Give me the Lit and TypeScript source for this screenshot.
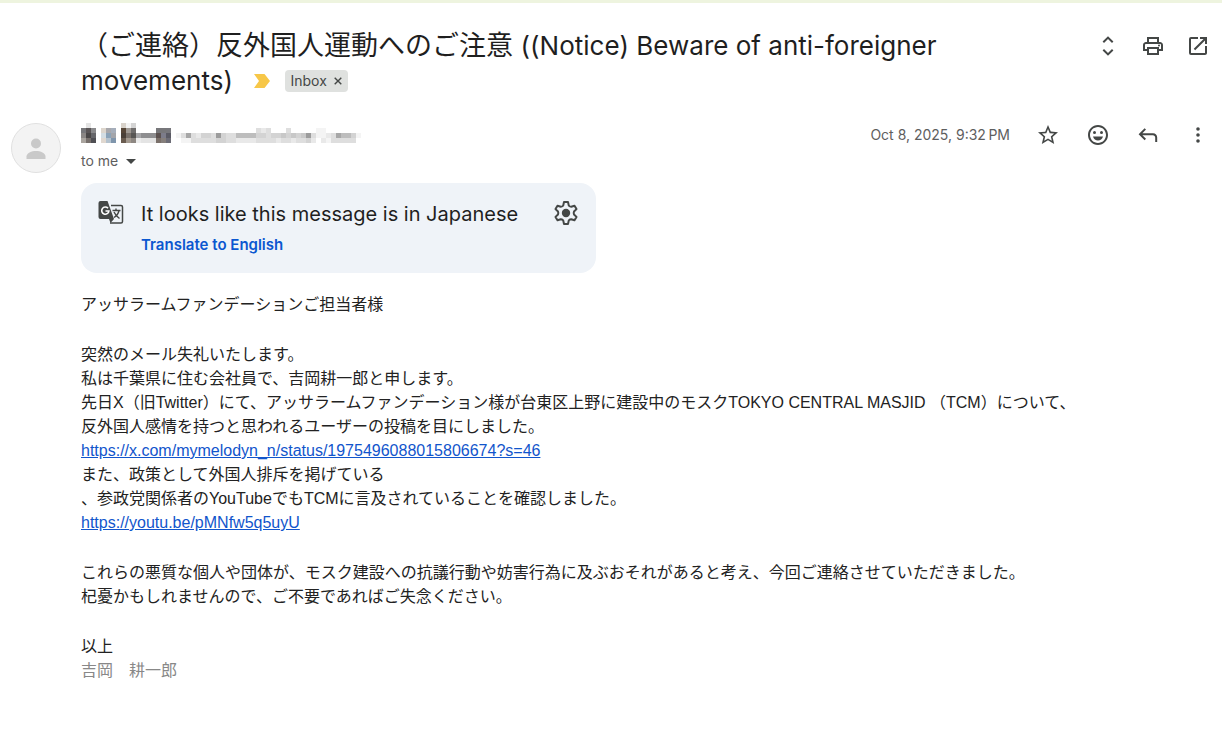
import { LitElement, html, css, svg } from "lit";
import { customElement } from "lit/decorators.js";

const CELL = 5;

type Run = [number, number, string[]];

/* Blurred-out sender name and address: rows of grey and tinted cells. */
const NAME: Run[] = [
  [1, 0, ["#e4e4e4"]],
  [0, 1, ["#77777a", "#5a5556", "#8a8a8c"]],
  [0, 2, ["#8a8684", "#4a4747", "#66666a"]],
  [0, 3, ["#aaa59f", "#77706c", "#4f4f54"]],
  [4, 1, ["#ddd6cd", "#a8a8ac", "#a5aebb"]],
  [4, 2, ["#d3dde3", "#8ba3b8", "#a3a5aa"]],
  [4, 3, ["#e0d8d0", "#b4c2ce", "#7f95ac"]],
  [8, 0, ["#d8d2ca", "#f4f4f4", "#d4d4d4"]],
  [8, 1, ["#564638", "#a09a94", "#6f6d6c"]],
  [8, 2, ["#4a4038", "#7a726c", "#585654", "#a6a6a8", "#8e8e90", "#8e8e90", "#8e8e90"]],
  [8, 3, ["#6a5c50", "#a39a90", "#8d8782", "#ececec", "#e4e4e4", "#e4e4e4", "#e4e4e4"]],
  [15, 1, ["#77777a", "#77777a", "#77777c"]],
  [15, 2, ["#5c5250", "#7c7c8a", "#5a5a64"]],
  [15, 3, ["#7a706a", "#857f7c", "#6c6c76"]],
];

/* Each digit is a shade: 0 is white, 9 the darkest grey. */
const shades = (s: string) => [...s].map((c) => {
  const v = 255 - Number(c) * 11;
  return `rgb(${v},${v},${v})`;
});

const ADDRESS: Run[] = [
  [35, 1, shades("32300030000011")],
  [19, 2, shades("1383244394336666443445454593112386641")],
  [19, 3, shades("0113333344332222333323323342021333330")],
];

const icon = (d: string) => html`<svg
  width="24" height="24" viewBox="0 0 24 24" fill="currentColor" aria-hidden="true"><path fill-rule="evenodd" d=${d}></path></svg>`;

const UNFOLD = "M12 2.2l5.4 5.3-1.4 1.4-4-4-4 4-1.4-1.4L12 2.2zM12 21.8l5.4-5.3-1.4-1.4-4 4-4-4-1.4 1.4 5.4 5.3z";
const PRINT = "M19 8h-1V3H6v5H5c-1.66 0-3 1.34-3 3v6h4v4h12v-4h4v-6c0-1.66-1.34-3-3-3zM8 5h8v3H8V5zm8 12v2H8v-4h8v2zm2-2v-2H6v2H4v-4c0-.55.45-1 1-1h14c.55 0 1 .45 1 1v4h-2zM17 11.5a1 1 0 1 0 2 0 1 1 0 1 0-2 0z";
const OPEN = "M19 19H5V5h7V3H5a2 2 0 0 0-2 2v14a2 2 0 0 0 2 2h14c1.1 0 2-.9 2-2v-7h-2v7zM14 3v2h3.59l-9.83 9.83 1.41 1.41L19 6.41V10h2V3h-7z";
const STAR = "M22 9.24l-7.19-.62L12 2 9.19 8.63 2 9.24l5.46 4.73L5.82 21 12 17.27 18.18 21l-1.63-7.03L22 9.24zM12 15.4l-3.76 2.27 1-4.28-3.32-2.88 4.38-.38L12 6.1l1.71 4.04 4.38.38-3.32 2.88 1 4.28L12 15.4z";
const SMILE = "M12 2C6.48 2 2 6.48 2 12s4.48 10 10 10 10-4.48 10-10S17.52 2 12 2zm0 18c-4.42 0-8-3.58-8-8s3.58-8 8-8 8 3.58 8 8-3.58 8-8 8zM8.5 8a1.5 1.5 0 1 0 0 3 1.5 1.5 0 0 0 0-3zM15.5 8a1.5 1.5 0 1 0 0 3 1.5 1.5 0 0 0 0-3zM7 13.5c.7 2.4 2.7 4 5 4s4.3-1.6 5-4H7z";
const REPLY = "M8.6 5.2l1.4 1.4L6.4 10.2H17c2.5 0 4.2 1.7 4.2 4.2V19h-2v-4.4c0-1.5-.9-2.4-2.4-2.4H6.4L10 15.8l-1.4 1.4L2.6 11.2l6-6z";
const MORE = "M12 4.2a1.8 1.8 0 1 0 0 3.6 1.8 1.8 0 0 0 0-3.6zM12 10.2a1.8 1.8 0 1 0 0 3.6 1.8 1.8 0 0 0 0-3.6zM12 16.2a1.8 1.8 0 1 0 0 3.6 1.8 1.8 0 0 0 0-3.6z";

@customElement("app-root")
export class AppRoot extends LitElement {
  static styles = css`
    :host {
      display: block;
      min-height: 100vh;
      box-sizing: border-box;
      border-top: 3px solid #eef4df;
      padding: 25px 12px 40px 11px;
      background: #fff;
      color: #1f1f1f;
      font-family: Inter, "Noto Sans CJK JP", sans-serif;
    }
    button {
      display: flex;
      padding: 0;
      border: 0;
      background: none;
      color: #444746;
      font: inherit;
      cursor: pointer;
    }
    svg { display: block; flex: none; }
    .subject { display: flex; justify-content: space-between; gap: 20px; padding-left: 70px; }
    .title { font-size: 27px; line-height: 35px; }
    h1 { display: inline; margin: 0; font: inherit; }
    .latin { font-size: 26px; }
    .labels { display: inline-flex; align-items: center; gap: 15px; margin-left: 14px; vertical-align: top; height: 35px; }
    .chip {
      display: flex;
      align-items: center;
      gap: 7px;
      height: 22px;
      padding: 0 6px 0 5px;
      border-radius: 4px;
      background: #dfe1df;
      color: #444746;
      font-size: 14px;
      line-height: 22px;
    }
    .tools { display: flex; gap: 21px; height: 35px; align-items: center; }
    .message { display: grid; grid-template-columns: 50px 1fr; column-gap: 20px; margin-top: 25px; }
    .head { display: flex; justify-content: space-between; align-items: flex-start; gap: 20px; min-height: 60px; }
    .to { align-items: center; gap: 8px; margin-top: 8px; font-size: 14px; line-height: 20px; color: #5e5e5e; }
    .meta { display: flex; align-items: center; gap: 26px; }
    time { font-size: 14px; line-height: 24px; color: #5e5e5e; }
    .banner {
      display: grid;
      grid-template-columns: 26px 1fr 28px;
      column-gap: 17px;
      width: 515px;
      max-width: 100%;
      box-sizing: border-box;
      padding: 16px 16px 16px 17px;
      border-radius: 16px;
      background: #eff3f8;
    }
    h2 { margin: 0; font-size: 20px; line-height: 30px; font-weight: 400; }
    .translate { display: inline-block; margin-top: 4px; color: #0b57d0; font-size: 15px; line-height: 24px; font-weight: 600; text-decoration: none; }
    .body { margin-top: 20px; font: 16px/24px "Liberation Sans", "Noto Sans CJK JP", sans-serif; color: #222; }
    .body p { margin: 0 0 26px; }
    .body a { color: #1155cc; text-decoration: underline; }
    .signature { color: #888; }
  `;

  private cells() {
    return [...NAME, ...ADDRESS].map(([x, y, colours]) =>
      colours.map((c, i) => svg`<rect x=${(x + i) * CELL} y=${y * CELL} width=${CELL} height=${CELL} fill=${c}></rect>`));
  }

  render() {
    return html`
      <header class="subject">
        <div class="title">
          <h1>（ご連絡）反外国人運動へのご注意 <span class="latin">((Notice) Beware of anti-foreigner movements)</span></h1>
          <span class="labels">
            <svg width="16" height="14" viewBox="0 0 16 14" fill="#f7c748" aria-hidden="true"><path d="M0 0h10.5L16 7l-5.5 7H0l5-7z"></path></svg>
            <span class="chip">Inbox
              <button aria-label="Remove label Inbox"><svg width="8" height="8" viewBox="0 0 8 8" fill="none" stroke="currentColor" stroke-width="1.4" aria-hidden="true"><path d="M.7.7l6.6 6.6M7.3.7L.7 7.3"></path></svg></button>
            </span>
          </span>
        </div>
        <div class="tools">
          <button aria-label="Expand all">${icon(UNFOLD)}</button>
          <button aria-label="Print all">${icon(PRINT)}</button>
          <button aria-label="In new window">${icon(OPEN)}</button>
        </div>
      </header>

      <article class="message">
        <svg width="50" height="50" viewBox="0 0 50 50" aria-hidden="true">
          <circle cx="25" cy="25" r="24.5" fill="#f3f3f3" stroke="#e0e0e0"></circle>
          <circle cx="25" cy="20.5" r="5" fill="#c9c9c9"></circle>
          <path d="M15.5 36v-2.500c0-3.500 5-5.500 9.500-5.500s9.500 2 9.500 5.500V36z" fill="#c9c9c9"></path>
        </svg>
        <div>
          <div class="head">
            <div>
              <svg width="280" height="20" viewBox="0 0 280 20" shape-rendering="crispEdges" role="img" aria-label="Hidden sender">${this.cells()}</svg>
              <button class="to">to me <svg width="10" height="5" viewBox="0 0 10 5" fill="#444746" aria-hidden="true"><path d="M0 0h10L5 5z"></path></svg></button>
            </div>
            <div class="meta">
              <time datetime="2025-10-08T21:32">Oct 8, 2025, 9:32&#8239;PM</time>
              <button aria-label="Star">${icon(STAR)}</button>
              <button aria-label="Add reaction">${icon(SMILE)}</button>
              <button aria-label="Reply">${icon(REPLY)}</button>
              <button aria-label="More">${icon(MORE)}</button>
            </div>
          </div>

          <section class="banner">
            <svg width="26" height="26" viewBox="0 0 26 26" fill="none" aria-hidden="true">
              <path d="M13 6.5h10a1.500 1.500 0 0 1 1.500 1.500v14.500A1.500 1.500 0 0 1 23 24H12" stroke="#444746" stroke-width="1.5"></path>
              <path d="M2.500 2H9.500l6.500 18H2.500A2 2 0 0 1 .5 18V4a2 2 0 0 1 2-2z" fill="#444746"></path>
              <path d="M11 20h5l-3.500 4z" fill="#444746"></path>
              <path d="M10 9.200A3.600 3.600 0 1 0 10.900 12H7.500" stroke="#fff" stroke-width="1.6"></path>
              <path d="M14.500 11.500h8M18 9.500v2M21 11.500c-.6 3-2.600 5.500-5 7M16 13c1 2.500 3 4.500 5.500 6.500" stroke="#444746" stroke-width="1.4"></path>
            </svg>
            <div>
              <h2>It looks like this message is in Japanese</h2>
              <a class="translate" href="#">Translate to English</a>
            </div>
            <button aria-label="Translation settings">
              <svg width="28" height="28" viewBox="0 0 28 28" fill="none" stroke="#444746" stroke-width="2" stroke-linejoin="round" aria-hidden="true">
                <path d="M12 3h4l.8 3.600q1.200 1.200 2.400 1.200l3.300-1.100 2 3.400-2.500 2.400q-.6 1.500 0 3l2.500 2.400-2 3.400-3.300-1.100q-1.200 0-2.400 1.200L16 25h-4l-.8-3.600q-1.200-1.200-2.400-1.200l-3.300 1.100-2-3.400L6 15.500q.6-1.500 0-3l-2.500-2.400 2-3.400 3.300 1.100q1.200 0 2.400-1.200z"></path>
                <circle cx="14" cy="14" r="4.2" fill="#444746" stroke="none"></circle>
              </svg>
            </button>
          </section>

          <div class="body" lang="ja">
            <p>アッサラームファンデーションご担当者様</p>
            <p>突然のメール失礼いたします。<br>私は千葉県に住む会社員で、吉岡耕一郎と申します。<br>先日X（旧Twitter）にて、アッサラームファンデーション様が台東区上野に建設中のモスクTOKYO CENTRAL MASJID （TCM）について、<br>反外国人感情を持つと思われるユーザーの投稿を目にしました。<br><a href="https://x.com/mymelodyn_n/status/1975496088015806674?s=46">https://x.com/mymelodyn_n/status/1975496088015806674?s=46</a><br>また、政策として外国人排斥を掲げている<br>、参政党関係者のYouTubeでもTCMに言及されていることを確認しました。<br><a href="https://youtu.be/pMNfw5q5uyU">https://youtu.be/pMNfw5q5uyU</a></p>
            <p>これらの悪質な個人や団体が、モスク建設への抗議行動や妨害行為に及ぶおそれがあると考え、今回ご連絡させていただきました。<br>杞憂かもしれませんので、ご不要であればご失念ください。</p>
            <p>以上<br><span class="signature">吉岡　耕一郎</span></p>
          </div>
        </div>
      </article>
    `;
  }
}
